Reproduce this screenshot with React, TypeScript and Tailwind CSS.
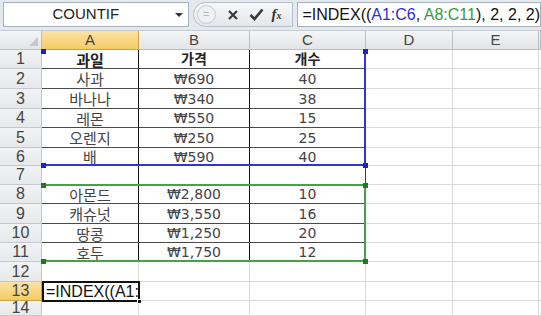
import React from "react";

const cols = ["A", "B", "C", "D", "E", ""];

type Row = { a: string; b: string; c: string; bold?: boolean } | null;

const rows: Row[] = [
  { a: "과일", b: "가격", c: "개수", bold: true },
  { a: "사과", b: "₩690", c: "40" },
  { a: "바나나", b: "₩340", c: "38" },
  { a: "레몬", b: "₩550", c: "15" },
  { a: "오렌지", b: "₩250", c: "25" },
  { a: "배", b: "₩590", c: "40" },
  { a: "", b: "", c: "" },
  { a: "아몬드", b: "₩2,800", c: "10" },
  { a: "캐슈넛", b: "₩3,550", c: "16" },
  { a: "땅콩", b: "₩1,250", c: "20" },
  { a: "호두", b: "₩1,750", c: "12" },
  null,
  null,
  null,
];

// rows whose bottom line is drawn in dark grey inside the table
const darkBottom = [1, 2, 3, 4, 5, 8, 9, 10];

function Handle({ className }: { className: string }) {
  return <div className={`absolute h-[5px] w-[5px] ${className}`} />;
}

function FormulaBar() {
  return (
    <div className="flex h-[31px] items-start gap-[4px] border-b border-[#c5ccd5] bg-[#e4e9ef] pl-[3px] pt-[2px]">
      <div className="relative flex h-[25px] w-[186px] items-center justify-center border border-[#a9b1bb] bg-white text-[15px] text-[#222]">
        <span className="-ml-[20px]">COUNTIF</span>
        <span className="absolute right-[5px] top-[10px] h-0 w-0 border-x-[4px] border-t-[4px] border-x-transparent border-t-[#333]" />
      </div>
      <div className="flex h-[25px] w-[101px] items-center rounded-l-full border border-[#b8bfc8] bg-gradient-to-b from-[#f7f8fa] to-[#e3e6ea]">
        <div className="ml-[3px] flex h-[19px] w-[19px] items-center justify-center rounded-full border border-[#c6cbd2] bg-[#eef0f3] text-[11px] leading-none text-[#b7bcc3]">
          =
        </div>
        <svg className="ml-[11px]" width="12" height="12" viewBox="0 0 12 12">
          <path d="M2 2 L10 10 M10 2 L2 10" stroke="#3a3a3a" strokeWidth="2.2" />
        </svg>
        <svg className="ml-[10px]" width="15" height="13" viewBox="0 0 15 13">
          <path d="M1.5 7 L5.5 11 L13.5 1.5" stroke="#3a3a3a" strokeWidth="2.6" fill="none" />
        </svg>
        <span className="ml-[8px] font-['Liberation_Serif'] text-[15px] font-bold italic leading-none text-[#333]">
          f<span className="text-[10px]">x</span>
        </span>
      </div>
      <div className="flex h-[25px] flex-1 items-center border border-[#a9b1bb] bg-white pl-[4px] text-[16px] text-[#111]">
        <span className="whitespace-pre">
          =INDEX((<span className="text-[#2f2fc8]">A1:C6</span>, <span className="text-[#3b963b]">A8:C11</span>), 2, 2, 2)
        </span>
      </div>
    </div>
  );
}

export default function App() {
  return (
    <div className="h-[316px] w-[541px] overflow-hidden bg-white font-['Liberation_Sans'] text-[#333]">
      <FormulaBar />
      <div className="relative grid grid-cols-[42px_97px_111px_116px_87px_86px_2px] grid-rows-[19px_19px_20px_20px_19px_20px_18px_19px_19px_20px_19px_19px_20px_19px_15px]">
        {/* header row */}
        <div className="relative border-b border-r border-[#b9bec5] bg-gradient-to-b from-[#f4f5f6] to-[#e2e4e7]">
          <span className="absolute bottom-[3px] right-[3px] h-0 w-0 border-b-[9px] border-l-[9px] border-b-[#c4c7cb] border-l-transparent" />
        </div>
        {cols.map((c, i) => (
          <div
            key={c + i}
            className={`flex items-center justify-center border-b border-r text-[15px] text-[#444] ${
              i === 0
                ? "border-[#c8a24a] bg-gradient-to-b from-[#fbe3a4] to-[#f5cc62]"
                : "border-[#b9bec5] bg-gradient-to-b from-[#f4f5f6] to-[#e2e4e7]"
            }`}
          >
            {c}
          </div>
        ))}

        {rows.map((r, ri) => {
          const n = ri + 1;
          const inTable = r !== null;
          const bottom = darkBottom.includes(n) ? "border-b-[#4a4a4a]" : "border-b-[#dadada]";
          const cellBase = `flex items-center justify-center border-b border-r text-[14px] leading-none font-['DejaVu_Sans','Noto_Sans_CJK_KR',sans-serif] ${
            r?.bold ? "font-bold text-[#222]" : "text-[#444]"
          }`;
          return (
            <React.Fragment key={n}>
              <div
                className={`flex items-center justify-center border-b border-r text-[16px] text-[#444] ${
                  n === 13
                    ? "border-[#c8a24a] bg-gradient-to-b from-[#fbe3a4] to-[#f5cc62]"
                    : "border-[#c4c9cf] bg-gradient-to-b from-[#f2f3f4] to-[#e6e8ea]"
                }`}
              >
                {n}
              </div>
              {inTable ? (
                <>
                  <div className={`${cellBase} border-r-[#111] ${bottom}`}>
                    <span className="font-['Noto_Sans_CJK_KR',sans-serif] text-[15px]">{r.a}</span>
                  </div>
                  <div className={`${cellBase} border-r-[#111] ${bottom}`}>{r.b}</div>
                  <div className={`${cellBase} border-r-[#3a3a3a] ${bottom}`}>{r.c}</div>
                </>
              ) : (
                <>
                  <div className="border-b border-r border-[#dadada]" />
                  <div className="border-b border-r border-[#dadada]" />
                  <div className="border-b border-r border-[#dadada]" />
                </>
              )}
              <div className="border-b border-r border-[#dadada]" />
              <div className="border-b border-r border-[#dadada]" />
              <div className="border-b border-[#dadada]" />
            </React.Fragment>
          );
        })}

        {/* A1:C6 range highlight */}
        <div className="absolute left-[42px] top-[19px] h-[116px] w-[324px] border-b-2 border-r-2 border-[#3434d6]">
          <Handle className="-left-[1px] -top-[1px] bg-[#2020c8]" />
          <Handle className="-right-[4px] -top-[1px] bg-[#2020c8]" />
          <Handle className="-bottom-[4px] -left-[1px] bg-[#2020c8]" />
          <Handle className="-bottom-[4px] -right-[4px] bg-[#2020c8]" />
        </div>

        {/* A8:C11 range highlight */}
        <div className="absolute left-[42px] top-[153px] h-[78px] w-[324px] border-b-2 border-r-2 border-t-2 border-[#48a048]">
          <Handle className="-left-[1px] -top-[3px] bg-[#1f7a1f]" />
          <Handle className="-right-[4px] -top-[3px] bg-[#1f7a1f]" />
          <Handle className="-bottom-[4px] -left-[1px] bg-[#1f7a1f]" />
          <Handle className="-bottom-[4px] -right-[4px] bg-[#1f7a1f]" />
        </div>

        {/* active cell A13 in edit mode, text clipped by the cell */}
        <div className="absolute left-[42px] top-[250px] flex h-[21px] w-[98px] items-center overflow-hidden border-2 border-[#111] bg-white pl-[2px] text-[16px] whitespace-nowrap text-[#111]">
          <span>=INDEX((A1:C6, A8:C11), 2, 2, 2)</span>
        </div>
        <div className="absolute left-[137px] top-[268px] h-[5px] w-[5px] border border-white bg-[#111]" />
      </div>
    </div>
  );
}
